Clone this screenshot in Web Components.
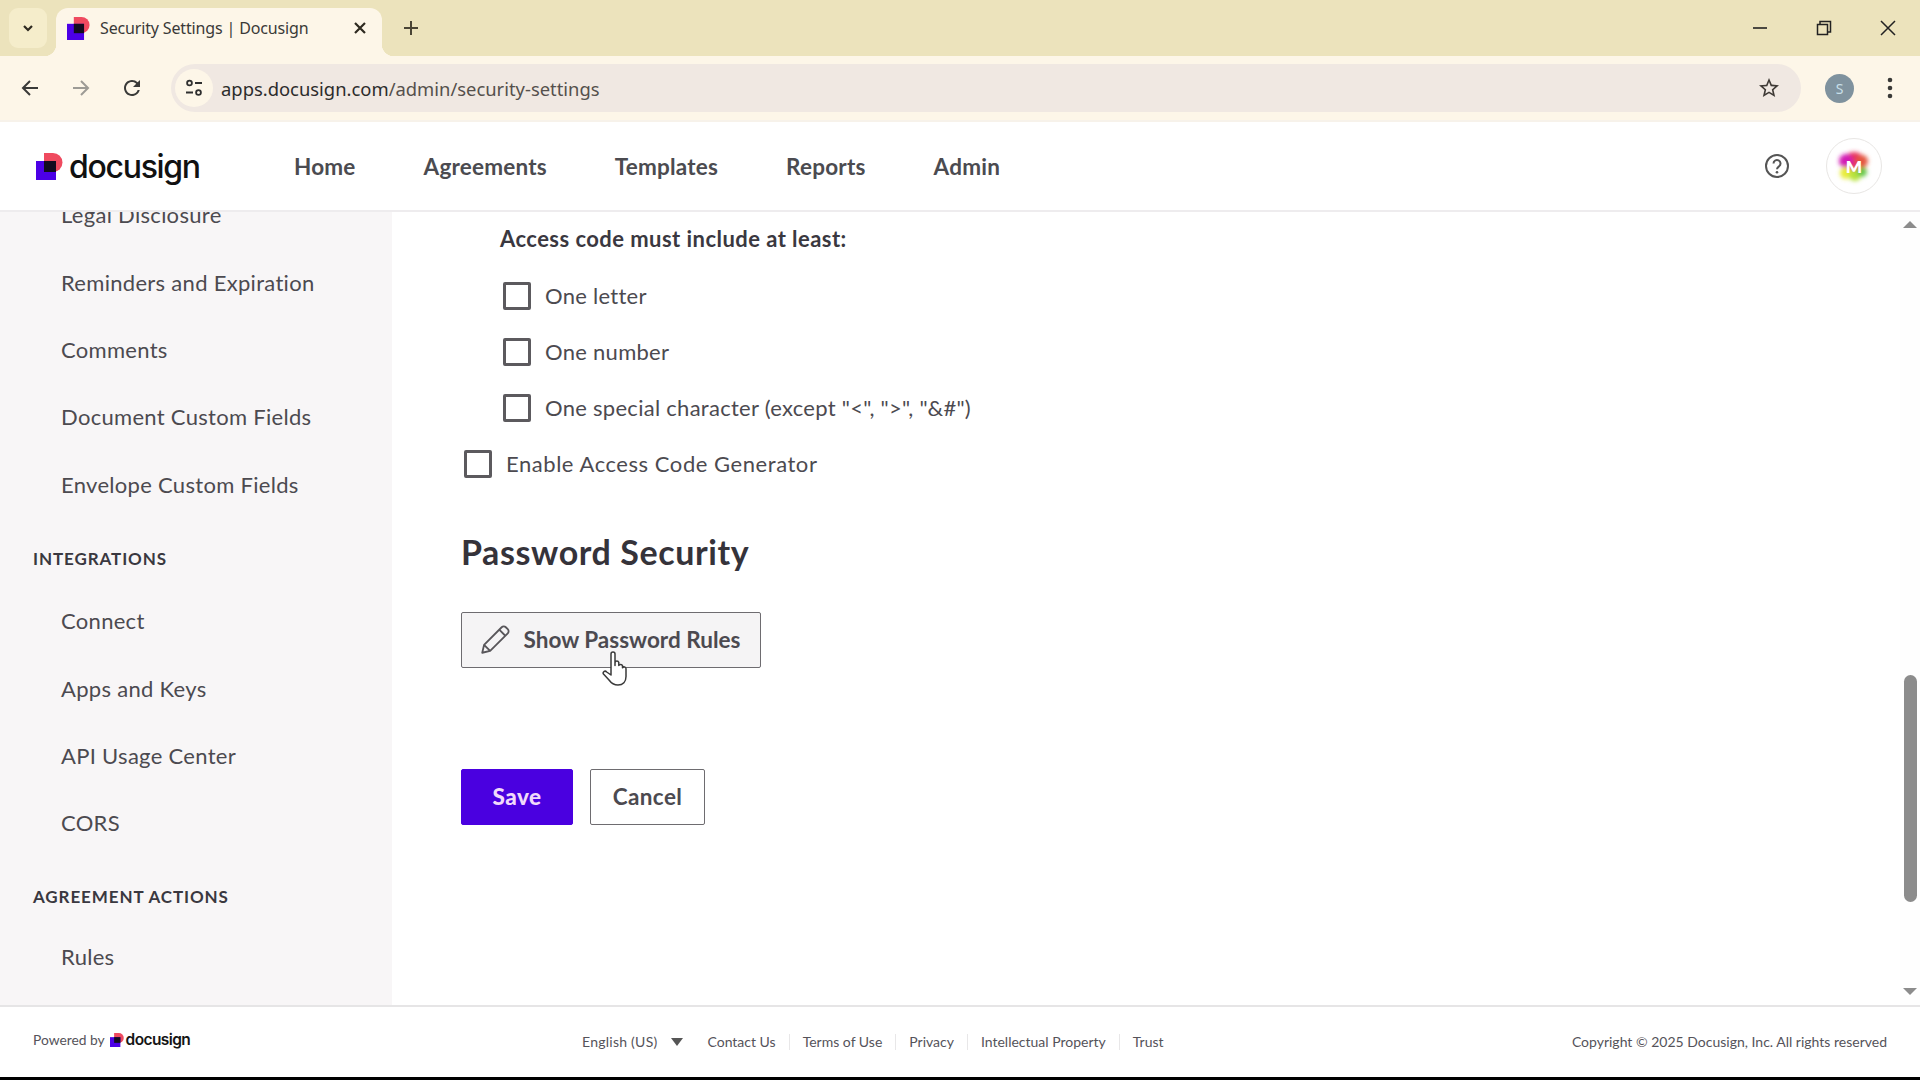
<!DOCTYPE html>
<html>
<head>
<meta charset="utf-8">
<title>Security Settings | Docusign</title>
<style>
  html, body { margin: 0; height: 1080px; overflow: hidden; background: #000; }
  body { font-family: "Lato", "Liberation Sans", sans-serif; }
  app-shell { height: 1077px; }
</style>
</head>
<body>
<app-shell>
  <browser-tabs slot="chrome"></browser-tabs>
  <browser-toolbar slot="chrome"></browser-toolbar>
  <ds-header slot="chrome"></ds-header>

  <ds-sidebar slot="side">
    <nav-item>Legal Disclosure</nav-item>
    <nav-item>Reminders and Expiration</nav-item>
    <nav-item>Comments</nav-item>
    <nav-item>Document Custom Fields</nav-item>
    <nav-item>Envelope Custom Fields</nav-item>
    <nav-heading>INTEGRATIONS</nav-heading>
    <nav-item>Connect</nav-item>
    <nav-item>Apps and Keys</nav-item>
    <nav-item>API Usage Center</nav-item>
    <nav-item>CORS</nav-item>
    <nav-heading style="height:66.5px;padding-top:30px">AGREEMENT ACTIONS</nav-heading>
    <nav-item>Rules</nav-item>
  </ds-sidebar>

  <security-panel slot="main"></security-panel>
  <page-scrollbar slot="main"></page-scrollbar>

  <ds-footer slot="foot"></ds-footer>
</app-shell>

<script>
const tpl = (html) => {
  const t = document.createElement('template');
  t.innerHTML = html;
  return t;
};

class ShadowElement extends HTMLElement {
  constructor() {
    super();
    this._shadowRoot = this.attachShadow({ mode: 'open' });
    this._shadowRoot.appendChild(this.constructor.template.content.cloneNode(true));
  }
}

class AppShell extends ShadowElement {
  static template = tpl(`
    <style>
      :host { display: flex; flex-direction: column; background: #fff; }
      .body { flex: 1; display: flex; min-height: 0; }
      .main { flex: 1; display: flex; min-width: 0; background: #fff; }
      .foot { height: 72px; }
    </style>
    <slot name="chrome"></slot>
    <div class="body">
      <slot name="side"></slot>
      <div class="main"><slot name="main"></slot></div>
    </div>
    <div class="foot"><slot name="foot"></slot></div>
  `);
}

class DsMark extends ShadowElement {
  static template = tpl(`
    <style>
      :host { display: inline-flex; flex: none; width: 27px; height: 27px; }
      svg { width: 100%; height: 100%; display: block; }
    </style>
    <svg viewBox="0 0 27 27">
      <path d="M8 0h9a9.5 9.5 0 0 1 0 19H8z" fill="#ef4a5f"/>
      <rect x="0" y="8" width="20" height="19" fill="#4c00e6"/>
      <rect x="8" y="8" width="12" height="11" fill="#120b1e"/>
    </svg>
  `);
}

class BrowserTabs extends ShadowElement {
  static template = tpl(`
    <style>
      :host { display: flex; align-items: flex-end; height: 56px; background: #ece3bc; color: #2e2a20;
        font-family: "Noto Sans", sans-serif; }
      .list { width: 38px; height: 40px; margin: 0 9px 8px 9px; border-radius: 9px; background: #f5edcb;
        display: flex; align-items: center; justify-content: center; }
      .tab { position: relative; width: 326px; height: 48px; background: #fdf6e8; border-radius: 12px 12px 0 0;
        display: flex; align-items: center; padding: 0 15px 8px 11px; box-sizing: border-box; }
      .tab::before, .tab::after { content: ''; position: absolute; bottom: 0; width: 12px; height: 12px; }
      .tab::before { left: -12px; background: radial-gradient(circle at 0 0, transparent 12px, #fdf6e8 12.5px); }
      .tab::after { right: -12px; background: radial-gradient(circle at 100% 0, transparent 12px, #fdf6e8 12.5px); }
      ds-mark { width: 23px; height: 23px; margin-right: 10px; }
      .title { flex: 1; font-size: 16px; letter-spacing: -.15px; white-space: nowrap; color: #3a3a38; }
      .plus { margin-left: 9px; margin-bottom: 8px; width: 40px; height: 40px; display: flex; align-items: center; justify-content: center; }
      .win { margin-left: auto; display: flex; height: 56px; align-items: center; }
      .win span { width: 64px; display: flex; justify-content: center; }
      svg { display: block; }
    </style>
    <div class="list">
      <svg width="14" height="14" viewBox="0 0 14 14"><path d="M3 5l4 4 4-4" fill="none" stroke="#2e2a20" stroke-width="2.2"/></svg>
    </div>
    <div class="tab">
      <ds-mark></ds-mark>
      <span class="title">Security Settings | Docusign</span>
      <svg width="14" height="14" viewBox="0 0 14 14"><path d="M2 2l10 10M12 2L2 12" stroke="#2e2a20" stroke-width="2.2"/></svg>
    </div>
    <div class="plus">
      <svg width="18" height="18" viewBox="0 0 18 18"><path d="M9 2v14M2 9h14" stroke="#4a4535" stroke-width="2"/></svg>
    </div>
    <div class="win">
      <span><svg width="16" height="16" viewBox="0 0 16 16"><path d="M1 8h14" stroke="#222" stroke-width="1.6"/></svg></span>
      <span><svg width="16" height="16" viewBox="0 0 16 16"><path d="M4 4V1.500h10.500V12H12M1.500 4.500h10v10h-10z" fill="none" stroke="#222" stroke-width="1.500"/></svg></span>
      <span><svg width="16" height="16" viewBox="0 0 16 16"><path d="M1 1l14 14M15 1L1 15" stroke="#222" stroke-width="1.500"/></svg></span>
    </div>
  `);
}

class BrowserToolbar extends ShadowElement {
  static template = tpl(`
    <style>
      :host { display: flex; align-items: center; height: 66px; background: #fdf6e8; box-sizing: border-box;
        padding: 0 0 0 18px; border-bottom: 2px solid #f7f2ea; font-family: "Noto Sans", sans-serif; }
      .nav { width: 24px; height: 24px; margin-right: 27px; }
      .nav:nth-of-type(3) { margin-right: 27px; }
      .omni { width: 1630px; height: 48px; border-radius: 24px; background: #f0e8e2; display: flex; align-items: center;
        flex: none; box-sizing: border-box; padding: 0 20px 0 4px; }
      .chip { width: 38px; height: 38px; border-radius: 50%; background: #fdf6e8; display: flex; align-items: center; justify-content: center; }
      .url { margin-left: 8px; font-size: 18.400px; color: #2c2c2c; white-space: nowrap; }
      .url i { font-style: normal; color: #55504c; }
      .star { margin-left: auto; }
      .me { margin-left: 24px; width: 29px; height: 29px; border-radius: 50%; background: #7f929e; color: #c9e0ea;
        font-size: 14px; display: flex; align-items: center; justify-content: center; flex: none; }
      .more { margin-left: 33px; }
      svg { display: block; flex: none; }
    </style>
    <svg class="nav" viewBox="0 0 24 24"><path d="M20 12H5M12 5l-7 7 7 7" fill="none" stroke="#3a3a38" stroke-width="2"/></svg>
    <svg class="nav" viewBox="0 0 24 24"><path d="M4 12h15M12 5l7 7-7 7" fill="none" stroke="#9d9b95" stroke-width="2"/></svg>
    <svg class="nav" viewBox="0 0 24 24"><path fill="#3a3a38" d="M17.650 6.350A7.958 7.958 0 0 0 12 4c-4.420 0-7.990 3.580-7.990 8s3.570 8 7.990 8c3.730 0 6.840-2.550 7.730-6h-2.080A5.990 5.990 0 0 1 12 18c-3.310 0-6-2.690-6-6s2.690-6 6-6c1.660 0 3.140.690 4.220 1.780L13 11h7V4l-2.350 2.350z"/></svg>
    <div class="omni">
      <span class="chip">
        <svg width="20" height="20" viewBox="0 0 20 20"><g fill="none" stroke="#2f2f2f" stroke-width="1.800"><circle cx="5.500" cy="5" r="2.400"/><path d="M11 5h7M2 14.500h7"/><circle cx="14.500" cy="14.500" r="2.400"/></g></svg>
      </span>
      <span class="url">apps.docusign.com<i>/admin/security-settings</i></span>
      <svg class="star" width="24" height="24" viewBox="0 0 24 24"><path fill="#3f3a36" d="M22 9.240l-7.190-.620L12 2 9.190 8.630 2 9.240l5.460 4.730L5.820 21 12 17.270 18.180 21l-1.630-7.030L22 9.240zM12 15.400l-3.760 2.270 1-4.280-3.320-2.880 4.380-.380L12 6.100l1.710 4.040 4.380.380-3.320 2.880 1 4.280L12 15.400z"/></svg>
    </div>
    <span class="me">S</span>
    <svg class="more" width="6" height="22" viewBox="0 0 6 22"><g fill="#3a3a38"><circle cx="3" cy="3" r="2.300"/><circle cx="3" cy="11" r="2.300"/><circle cx="3" cy="19" r="2.300"/></g></svg>
  `);
}

class DsHeader extends ShadowElement {
  static template = tpl(`
    <style>
      :host { display: flex; align-items: center; height: 90px; box-sizing: border-box; background: #fff;
        border-bottom: 2px solid #eeecee; padding: 0 38px 0 36px; }
      .logo { display: flex; align-items: center; width: 258px; flex: none; }
      .word { font-family: "Inter", sans-serif; font-weight: 500; font-size: 32px; letter-spacing: -1.300px; color: #111; margin-left: 6px; }
      nav { display: flex; gap: 68px; font-family: "Lato", sans-serif; font-weight: 700; font-size: 22.500px; letter-spacing: .2px; color: #4b4b50; }
      .right { margin-left: auto; display: flex; align-items: center; gap: 36px; }
      .avatar { width: 56px; height: 56px; border-radius: 50%; border: 1px solid #e8e6e4; box-sizing: border-box; position: relative; display: flex; align-items: center; justify-content: center; }
      .avatar b { position: absolute; font: 800 17px "Lato", sans-serif; color: #fff; }
      svg { display: block; }
    </style>
    <div class="logo"><ds-mark></ds-mark><span class="word">docusign</span></div>
    <nav><span>Home</span><span>Agreements</span><span>Templates</span><span>Reports</span><span>Admin</span></nav>
    <div class="right">
      <svg width="26" height="26" viewBox="0 0 26 26"><circle cx="13" cy="13" r="11" fill="none" stroke="#555" stroke-width="2"/><path d="M9.500 10.500a3.500 3.500 0 1 1 5.600 2.800c-1.300 1-2.100 1.400-2.100 3" fill="none" stroke="#555" stroke-width="2"/><circle cx="13" cy="19.300" r="1.300" fill="#555"/></svg>
      <div class="avatar">
        <svg width="44" height="44" viewBox="0 0 44 44">
          <defs><filter id="b" x="-30%" y="-30%" width="160%" height="160%"><feGaussianBlur stdDeviation="2"/></filter></defs>
          <g filter="url(#b)">
            <circle cx="22" cy="20" r="12" fill="#e8345c"/>
            <circle cx="14" cy="17" r="7" fill="#d21fb4"/>
            <circle cx="30" cy="17" r="6" fill="#e4573f"/>
            <circle cx="14" cy="29" r="6" fill="#e8ec3a"/>
            <circle cx="23" cy="31" r="6" fill="#b7e33c"/>
            <circle cx="30" cy="28" r="5" fill="#67c84a"/>
          </g>
        </svg>
        <b>M</b>
      </div>
    </div>
  `);
}

class DsSidebar extends ShadowElement {
  static template = tpl(`
    <style>
      :host { display: block; width: 392px; flex: none; background: #f8f6f7; overflow: hidden; }
      .scroll { margin-top: -31px; }
    </style>
    <div class="scroll"><slot></slot></div>
  `);
}

class NavItem extends ShadowElement {
  static template = tpl(`
    <style>
      :host { display: flex; align-items: center; height: 67.400px; padding-left: 61px; font-size: 22px; color: #4c4a50; letter-spacing: .3px; white-space: nowrap; }
    </style>
    <slot></slot>
  `);
}

class NavHeading extends ShadowElement {
  static template = tpl(`
    <style>
      :host { display: block; height: 69px; box-sizing: border-box; padding: 31px 0 0 33px; line-height: 20px; font-size: 17px; font-weight: 700; letter-spacing: .9px; color: #3a3840; white-space: nowrap; }
    </style>
    <slot></slot>
  `);
}

class SecurityPanel extends ShadowElement {
  static template = tpl(`
    <style>
      :host { display: block; flex: 1; min-width: 0; padding: 13px 0 0 69px; box-sizing: border-box; position: relative; color: #4c4a50; }
      .lead { margin: 0 0 15px 39px; line-height: 28px; font-size: 22px; letter-spacing: .45px; font-weight: 700; color: #3a3840; }
      h2 { margin: 40px 0 40px; font-size: 34px; line-height: 40px; font-weight: 700; letter-spacing: .6px; color: #35333a; }
      .actions { display: flex; gap: 17px; margin-top: 101px; }
      .pencil { margin: 0 -2px 0 -4px; }
    </style>
    <p class="lead">Access code must include at least:</p>
    <ds-check nested>One letter</ds-check>
    <ds-check nested>One number</ds-check>
    <ds-check nested>One special character (except "&lt;", "&gt;", "&amp;#")</ds-check>
    <ds-check style="letter-spacing:.55px">Enable Access Code Generator</ds-check>
    <h2>Password Security</h2>
    <ds-button variant="hover" style="width:300px">
      <svg class="pencil" slot="icon" width="34" height="34" viewBox="0 0 28 28"><path d="M3.500 24.500l1.500-6.500L19.500 3.500a2.400 2.400 0 0 1 3.400 0l1.600 1.600a2.400 2.400 0 0 1 0 3.400L10 23zM5 18l5 5M17.500 5.500l5 5" fill="none" stroke="#58565a" stroke-width="1.500" stroke-linejoin="round"/></svg>
      Show Password Rules
    </ds-button>
    <div class="actions">
      <ds-button variant="primary" style="width:112px;letter-spacing:.5px">Save</ds-button>
      <ds-button style="width:115px;letter-spacing:.4px">Cancel</ds-button>
    </div>
    <hand-cursor></hand-cursor>
  `);
}

class DsCheck extends ShadowElement {
  static template = tpl(`
    <style>
      :host { display: flex; align-items: center; height: 56px; padding-left: 3px; gap: 14px; font-size: 22px; letter-spacing: .28px; color: #4c4a50; white-space: nowrap; }
      :host([nested]) { padding-left: 42px; }
      .box { width: 28px; height: 28px; box-sizing: border-box; border: 3px solid #5c5a5e; border-radius: 2px; background: #fff; flex: none; }
      .text { margin-top: -2px; }
    </style>
    <span class="box"></span><span class="text"><slot></slot></span>
  `);
}

class DsButton extends ShadowElement {
  static template = tpl(`
    <style>
      :host { display: flex; align-items: center; justify-content: center; gap: 14px; height: 56px; box-sizing: border-box;
        border: 1.500px solid #6e6c70; border-radius: 2px; background: #fff; font-size: 22.500px; font-weight: 700; color: #4c4a50; white-space: nowrap; }
      :host([variant="hover"]) { background: #f5f4f5; }
      :host([variant="primary"]) { background: #4a00e0; border-color: #4a00e0; color: #f1d9fb; font-weight: 900; }
      ::slotted(svg) { display: block; }
      .text { margin-top: -2px; }
    </style>
    <slot name="icon"></slot><span class="text"><slot></slot></span>
  `);
}

class HandCursor extends ShadowElement {
  static template = tpl(`
    <style>
      :host { display: block; position: absolute; left: 210px; top: 439px; width: 28px; height: 36px; }
      svg { display: block; }
    </style>
    <svg width="28" height="36" viewBox="0 0 28 36"><path d="M9 3a2 2 0 0 1 4 0v11.500l0-3a2 2 0 0 1 3.800 0v3a2 2 0 0 1 3.700.300v2a1.900 1.900 0 0 1 3.500.700v8c0 5-3 8.500-8 8.500-4 0-6.500-1.500-9-5L1.500 23c-1.200-1.800 1.300-4 3.200-2L9 24z" fill="#fff" stroke="#3a3a3a" stroke-width="1.500" stroke-linejoin="round"/></svg>
  `);
}

class PageScrollbar extends ShadowElement {
  static template = tpl(`
    <style>
      :host { display: flex; flex-direction: column; align-items: center; width: 20px; flex: none; padding: 9px 0 10px; box-sizing: border-box; background: #fefefe; }
      .up, .down { width: 0; height: 0; border-left: 7.500px solid transparent; border-right: 7.500px solid transparent; flex: none; }
      .up { border-bottom: 7px solid #8c8c8c; }
      .down { border-top: 7px solid #8c8c8c; margin-top: auto; }
      .thumb { width: 13px; height: 227px; border-radius: 6.500px; background: #8c8c8c; margin-top: 447px; flex: none; }
    </style>
    <span class="up"></span><span class="thumb"></span><span class="down"></span>
  `);
}

class DsFooter extends ShadowElement {
  static template = tpl(`
    <style>
      :host { display: grid; grid-template-columns: 549px 1fr auto; align-items: center; height: 72px; box-sizing: border-box;
        padding: 0 33px; background: #fff; border-top: 2px solid #e6e5e6; font-size: 14px; color: #55535a; white-space: nowrap; }
      .powered { display: flex; align-items: center; font-size: 13.800px; margin-top: -5px; }
      .powered ds-mark { width: 14px; height: 14px; margin-left: 5px; }
      .powered b { font: 600 15.500px "Inter", sans-serif; letter-spacing: -.6px; color: #151515; margin-left: 2px; }
      .links { display: flex; align-items: center; margin-top: -1px; }
      .links span { padding: 0 13px; border-left: 1px solid #e8e7e8; line-height: 16px; }
      .links span:first-of-type { border-left: 0; }
      .lang { display: flex; align-items: center; gap: 14px; margin-right: 11px; letter-spacing: .25px; }
      .lang i { width: 0; height: 0; border-left: 6.500px solid transparent; border-right: 6.500px solid transparent; border-top: 8px solid #555; }
      .copy { font-size: 14px; margin-top: -1px; }
    </style>
    <div class="powered">Powered by <ds-mark></ds-mark><b>docusign</b></div>
    <div class="links">
      <div class="lang">English (US) <i></i></div>
      <span>Contact Us</span><span>Terms of Use</span><span>Privacy</span><span>Intellectual Property</span><span>Trust</span>
    </div>
    <div class="copy">Copyright © 2025 Docusign, Inc. All rights reserved</div>
  `);
}

customElements.define('app-shell', AppShell);
customElements.define('ds-mark', DsMark);
customElements.define('browser-tabs', BrowserTabs);
customElements.define('browser-toolbar', BrowserToolbar);
customElements.define('ds-header', DsHeader);
customElements.define('ds-sidebar', DsSidebar);
customElements.define('nav-item', NavItem);
customElements.define('nav-heading', NavHeading);
customElements.define('security-panel', SecurityPanel);
customElements.define('ds-check', DsCheck);
customElements.define('ds-button', DsButton);
customElements.define('hand-cursor', HandCursor);
customElements.define('page-scrollbar', PageScrollbar);
customElements.define('ds-footer', DsFooter);
</script>
</body>
</html>
